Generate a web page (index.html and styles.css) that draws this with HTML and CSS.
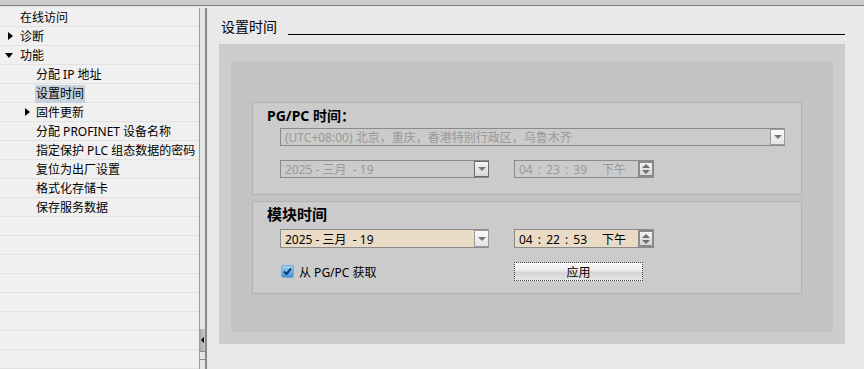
FILE: index.html
```html
<!DOCTYPE html>
<html>
<head>
    <link rel="stylesheet" href="styles.css">
</head>
<body>
<div class="topbar"></div>
<div class="layout">
    <div class="sidebar">
        <div class="row">在线访问</div>
        <div class="row"><span class="tri tri-right"></span>诊断</div>
        <div class="row"><span class="tri tri-down"></span>功能</div>
        <div class="row sub">分配 IP 地址</div>
        <div class="row sub"><span class="selected">设置时间</span></div>
        <div class="row sub"><span class="tri tri-right sub-tri"></span>固件更新</div>
        <div class="row sub">分配 PROFINET 设备名称</div>
        <div class="row sub">指定保护 PLC 组态数据的密码</div>
        <div class="row sub">复位为出厂设置</div>
        <div class="row sub">格式化存储卡</div>
        <div class="row sub">保存服务数据</div>
    </div>
    <div class="splitter">
        <div class="grip"><span class="grip-arrow"></span></div>
        <div class="grip-end"></div>
    </div>
    <div class="main">
        <div class="title-row">
            <span class="title">设置时间</span>
            <span class="title-rule"></span>
        </div>
        <div class="outer-panel">
            <div class="inner-panel">
                <div class="group">
                    <div class="group-label">PG/PC 时间：</div>
                    <div class="field field-disabled tz">
                        <span class="field-text">(UTC+08:00) 北京，重庆，香港特别行政区，乌鲁木齐</span>
                        <span class="drop-btn light"><span class="drop-arrow"></span></span>
                    </div>
                    <div class="field-row">
                        <div class="field field-disabled date">
                            <span class="field-text">2025 - 三月&nbsp; - 19</span>
                            <span class="drop-btn"><span class="drop-arrow"></span></span>
                        </div>
                        <div class="field field-disabled time">
                            <span class="field-text"><span class="clock">04 : 23 : 39</span><span class="ampm">下午</span></span>
                            <span class="spin-btn"><span class="spin-up"></span><span class="spin-down"></span></span>
                        </div>
                    </div>
                </div>
                <div class="group group-module">
                    <div class="group-label big">模块时间</div>
                    <div class="field-row first">
                        <div class="field field-active date tall">
                            <span class="field-text">2025 - 三月&nbsp; - 19</span>
                            <span class="drop-btn light"><span class="drop-arrow"></span></span>
                        </div>
                        <div class="field field-active time tall">
                            <span class="field-text"><span class="clock">04 : 22 : 53</span><span class="ampm">下午</span></span>
                            <span class="spin-btn"><span class="spin-up"></span><span class="spin-down"></span></span>
                        </div>
                    </div>
                    <div class="field-row check-row">
                        <label class="check">
                            <span class="check-box">
                                <svg width="11" height="11" viewBox="0 0 11 11"><path d="M2 5.5 L4.5 8 L9 2.5" fill="none" stroke="#0d3d70" stroke-width="2"/></svg>
                            </span>
                            从 PG/PC 获取
                        </label>
                        <button class="apply">应用</button>
                    </div>
                </div>
            </div>
        </div>
    </div>
</div>
</body>
</html>
```

FILE: styles.css
```css
body {
    margin: 0;
    padding: 0;
    background-color: #e9e9e9;
    font-family: "Noto Sans", "Noto Sans CJK SC", sans-serif;
    font-size: 12px;
    color: #000;
    overflow: hidden;
}

.topbar {
    height: 5px;
    background-color: #cccccc;
    border-bottom: 1px solid #7f7f7f;
}

.layout {
    display: flex;
    height: 363px;
}

.sidebar {
    width: 199px;
    margin-top: 2px;
    background: repeating-linear-gradient(to bottom, #f0f0f0 0, #f0f0f0 18px, #e2e2e2 18px, #e2e2e2 19px);
}

.row {
    height: 19px;
    line-height: 20px;
    padding-left: 20px;
    display: flex;
    align-items: center;
    white-space: nowrap;
    position: relative;
}

.row.sub {
    padding-left: 36px;
}

.selected {
    background-color: #c5d2dd;
    padding: 0 1px;
    margin-left: -1px;
    line-height: 18px;
}

.tri {
    position: absolute;
    width: 0;
    height: 0;
}

.tri-right {
    left: 8px;
    top: 5px;
    border-top: 4px solid transparent;
    border-bottom: 4px solid transparent;
    border-left: 5px solid #000;
}

.tri-down {
    left: 5px;
    top: 7px;
    border-left: 4px solid transparent;
    border-right: 4px solid transparent;
    border-top: 5px solid #000;
}

.sub-tri {
    left: 25px;
}

.splitter {
    width: 5px;
    margin-top: 2px;
    background-color: #e6e6e6;
    border-left: 1px solid #9c9c9c;
    border-right: 2px solid #8a8a8a;
    display: flex;
    flex-direction: column;
    justify-content: flex-end;
    padding-bottom: 9px;
}

.grip {
    height: 22px;
    background: linear-gradient(to right, #a9a9a9, #c8c8c8);
    border-bottom: 1px solid #8a8a8a;
    display: flex;
    align-items: center;
    justify-content: center;
}

.grip-arrow {
    width: 0;
    height: 0;
    border-top: 3px solid transparent;
    border-bottom: 3px solid transparent;
    border-right: 3px solid #000;
}

.grip-end {
    height: 7px;
    border-bottom: 1px solid #8a8a8a;
}

.main {
    flex: 1;
    background-color: #e9e9e9;
}

.title-row {
    display: flex;
    align-items: flex-start;
    height: 38px;
    box-sizing: border-box;
    padding: 12px 19px 0 14px;
}

.title {
    font-size: 14px;
    line-height: 18px;
    margin-right: 11px;
}

.title-rule {
    flex: 1;
    height: 1px;
    margin-top: 16px;
    background-color: #000;
}

.outer-panel {
    margin: 0 19px 0 12px;
    height: 300px;
    background-color: #cccccc;
    padding: 18px 12px 12px 12px;
    box-sizing: border-box;
}

.inner-panel {
    height: 270px;
    background-color: #c3c3c3;
    padding: 40px 31px 0 21px;
    box-sizing: border-box;
}

.group {
    height: 93px;
    background-color: #cbcbcb;
    border: 1px solid #b2b2b2;
    box-sizing: border-box;
    padding-left: 27px;
}

.group-module {
    margin-top: 6px;
}

.group-label {
    font-weight: bold;
    font-size: 14px;
    height: 25px;
    line-height: 26px;
    margin-left: -13px;
}

.group-label.big {
    font-size: 15px;
    line-height: 24px;
}

.field {
    display: flex;
    height: 18px;
    border: 1px solid #8a8a8a;
    box-sizing: border-box;
    align-items: center;
}

.field.tall {
    height: 19px;
}

.field-disabled {
    background-color: #cbcbcb;
    color: #999999;
}

.field-active {
    background-color: #e9dbc5;
    color: #000;
}

.field-text {
    flex: 1;
    padding-left: 4px;
    white-space: nowrap;
    overflow: hidden;
}

.clock {
    word-spacing: 2px;
}

.ampm {
    margin-left: 15px;
}

.tz {
    width: 505px;
}

.field-row {
    display: flex;
    margin-top: 14px;
    align-items: center;
}

.field-row.first {
    margin-top: 2px;
}

.date {
    width: 209px;
}

.time {
    width: 140px;
    margin-left: 25px;
}

.drop-btn {
    width: 15px;
    height: 100%;
    box-sizing: border-box;
    border: 1px solid #6a6a6a;
    margin-right: -1px;
    background: linear-gradient(to bottom, #f4f4f4, #d8d8d8);
    display: flex;
    align-items: center;
    justify-content: center;
}

.drop-btn.light {
    border-color: #9a9a9a;
    background: linear-gradient(to bottom, #fafafa, #e4e4e4);
}

.drop-arrow {
    width: 0;
    height: 0;
    border-left: 4px solid transparent;
    border-right: 4px solid transparent;
    border-top: 4px solid #777;
}

.spin-btn {
    width: 16px;
    height: 100%;
    box-sizing: border-box;
    border: 2px solid #8a8a8a;
    margin-right: -1px;
    background: linear-gradient(to bottom, #f2f2f2, #d6d6d6);
    display: flex;
    flex-direction: column;
    align-items: center;
    justify-content: center;
    gap: 2px;
}

.spin-up {
    width: 0;
    height: 0;
    border-left: 4px solid transparent;
    border-right: 4px solid transparent;
    border-bottom: 4px solid #6e6e6e;
}

.spin-down {
    width: 0;
    height: 0;
    border-left: 4px solid transparent;
    border-right: 4px solid transparent;
    border-top: 4px solid #6e6e6e;
}

.check-row {
    margin-top: 14px;
}

.check {
    width: 234px;
    display: flex;
    align-items: center;
}

.check-box {
    width: 13px;
    height: 13px;
    box-sizing: border-box;
    border: 1px solid #7aa6cf;
    border-radius: 2px;
    background: linear-gradient(to bottom, #9fd0f4, #3f93dc);
    margin-left: 1px;
    margin-right: 5px;
    display: flex;
    align-items: center;
    justify-content: center;
}

.apply {
    width: 129px;
    height: 19px;
    padding: 0;
    font-family: "Noto Sans", "Noto Sans CJK SC", sans-serif;
    font-size: 12px;
    color: #000;
    border: 1px dotted #444;
    background: linear-gradient(to bottom, #f8f8f8 0%, #ececec 45%, #d6d6d6 55%, #e6e6e6 100%);
}
```
